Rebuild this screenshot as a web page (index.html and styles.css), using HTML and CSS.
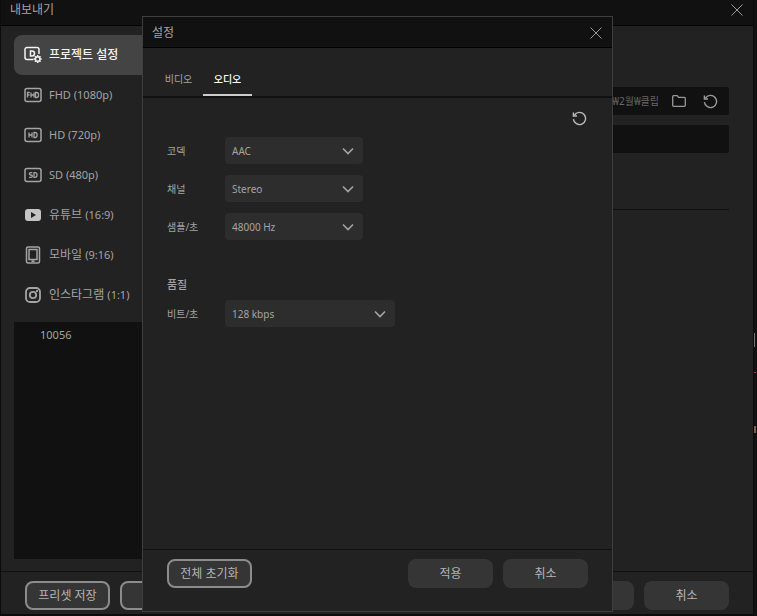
FILE: index.html
```html
<!DOCTYPE html>
<html lang="ko">
<head>
<meta charset="utf-8">
<title>내보내기</title>
<link rel="stylesheet" href="styles.css">
</head>
<body>
<svg class="sprite" aria-hidden="true">
  <symbol id="close" viewBox="0 0 12 12"><path d="M.5.5l11 11M11.5.5l-11 11"/></symbol>
  <symbol id="chevron" viewBox="0 0 12 8"><path d="M1 1.5l5 5 5-5"/></symbol>
  <symbol id="reset" viewBox="0 0 16 16"><path d="M2.400 4.600A6.500 6.500 0 1 1 1.500 8.600"/><path d="M1.500 1.500v3.800h3.800"/></symbol>
</svg>
<div class="screen">
  <div class="window">
    <header class="titlebar">
      <h1>내보내기</h1>
      <button class="icon-button" aria-label="닫기"><svg class="close"><use href="#close"/></svg></button>
    </header>
    <main class="workspace">
      <nav class="sidebar">
        <button class="preset active">
          <svg viewBox="0 0 18 18"><path d="M9.500 13.500H3a2 2 0 0 1-2-2V3.500a2 2 0 0 1 2-2h10a2 2 0 0 1 2 2V8"/><path d="M6.500 5v5H8a2.500 2.500 0 0 0 0-5z"/><circle cx="13.700" cy="13" r="2.300"/><path d="M13.700 9v1.500M13.700 15.500V17M9.700 13h1.500M16.200 13h1.500M10.900 10.200l1 1M15.500 14.800l1 1M16.500 10.200l-1 1M11.900 14.800l-1 1"/></svg>
          프로젝트 설정
        </button>
        <button class="preset">
          <svg viewBox="0 0 18 18"><rect x="1" y="2.500" width="16" height="13" rx="2"/><path class="fine" d="M3.500 11.500v-5h2.300M3.500 9h2M7 6.500v5M10 6.500v5M7 9h3M11.500 6.500v5h1a2 2 0 0 0 2-2v-1a2 2 0 0 0-2-2z"/></svg>
          <span class="latin">FHD (1080p)</span>
        </button>
        <button class="preset">
          <svg viewBox="0 0 18 18"><rect x="1" y="2.500" width="16" height="13" rx="2"/><path class="fine" d="M5 6.500v5M8 6.500v5M5 9h3M10 6.500v5h1a2 2 0 0 0 2-2v-1a2 2 0 0 0-2-2z"/></svg>
          <span class="latin">HD (720p)</span>
        </button>
        <button class="preset">
          <svg viewBox="0 0 18 18"><rect x="1" y="2.500" width="16" height="13" rx="2"/><path class="fine" d="M8.300 6.700H6.500a1.100 1.100 0 0 0 0 2.300h.7a1.100 1.100 0 0 1 0 2.300H5M10 6.700v4.600h1a2 2 0 0 0 2-2v-.6a2 2 0 0 0-2-2z"/></svg>
          <span class="latin">SD (480p)</span>
        </button>
        <button class="preset">
          <svg viewBox="0 0 18 18"><path class="solid" fill-rule="evenodd" d="M4 3h10a3 3 0 0 1 3 3v6a3 3 0 0 1-3 3H4a3 3 0 0 1-3-3V6a3 3 0 0 1 3-3zM7 6v6l5-3z"/></svg>
          <span>유튜브 <span class="latin">(16:9)</span></span>
        </button>
        <button class="preset">
          <svg viewBox="0 0 18 18"><rect x="2.500" y="1" width="13" height="16" rx="1.500"/><path d="M5 3.500h8v10H5zM7.500 15.200h3"/></svg>
          <span>모바일 <span class="latin">(9:16)</span></span>
        </button>
        <button class="preset">
          <svg class="bold" viewBox="0 0 18 18"><rect x="2" y="2" width="14" height="14" rx="4"/><circle cx="9" cy="9" r="3.200"/><circle class="solid" cx="13" cy="5" r="1"/></svg>
          <span>인스타그램 <span class="latin">(1:1)</span></span>
        </button>
        <ul class="saved"><li>10056</li></ul>
      </nav>
      <section class="output">
        <div class="field">
          <span>₩2월₩클립</span>
          <button class="icon-button" aria-label="폴더"><svg class="folder" viewBox="0 0 14 12"><path d="M.7 1.700a1 1 0 0 1 1-1h3.500l1.300 1.600h5.800a1 1 0 0 1 1 1v7a1 1 0 0 1-1 1H1.700a1 1 0 0 1-1-1z"/></svg></button>
          <button class="icon-button" aria-label="초기화"><svg class="reset"><use href="#reset"/></svg></button>
        </div>
        <input class="field" aria-label="파일 이름">
        <hr>
      </section>
    </main>
    <footer class="actions">
      <button class="button outlined">프리셋 저장</button>
      <button class="button outlined" aria-label="프리셋"></button>
      <button class="button push" aria-label="내보내기"></button>
      <button class="button">취소</button>
    </footer>
  </div>
  <div class="behind"><i class="light"></i><i class="red"></i><i class="amber"></i></div>

  <div class="dialog" role="dialog" aria-labelledby="dialog-title">
    <header class="dialog-title">
      <h2 id="dialog-title">설정</h2>
      <button class="icon-button" aria-label="닫기"><svg class="close"><use href="#close"/></svg></button>
    </header>
    <div class="tabs" role="tablist">
      <button role="tab" aria-selected="false">비디오</button>
      <button role="tab" aria-selected="true">오디오</button>
    </div>
    <form class="settings">
      <button type="button" class="icon-button restore" aria-label="초기화"><svg class="reset"><use href="#reset"/></svg></button>
      <div class="row">
        <label for="codec">코덱</label>
        <div class="select"><select id="codec"><option>AAC</option></select><svg><use href="#chevron"/></svg></div>
      </div>
      <div class="row">
        <label for="channel">채널</label>
        <div class="select"><select id="channel"><option>Stereo</option></select><svg><use href="#chevron"/></svg></div>
      </div>
      <div class="row">
        <label for="rate">샘플/초</label>
        <div class="select"><select id="rate"><option>48000 Hz</option></select><svg><use href="#chevron"/></svg></div>
      </div>
      <h3>품질</h3>
      <div class="row">
        <label for="bits">비트/초</label>
        <div class="select wide"><select id="bits"><option>128 kbps</option></select><svg><use href="#chevron"/></svg></div>
      </div>
    </form>
    <footer class="actions">
      <button class="button outlined">전체 초기화</button>
      <button class="button push">적용</button>
      <button class="button">취소</button>
    </footer>
  </div>
</div>
</body>
</html>
```
FILE: styles.css
```css
* { box-sizing: border-box; }

body {
  margin: 0;
  background: #111;
  color: #a4a4a4;
  font: 12px/16px "Noto Sans", "Noto Sans CJK KR", sans-serif;
}

h1, h2, h3 { margin: 0; font-size: 12px; font-weight: 400; }
button, input, select { font: inherit; color: inherit; }
button { padding: 0; border: 0; background: none; }
svg { flex: none; fill: none; stroke: currentColor; }
.sprite { position: absolute; width: 0; height: 0; }
.latin { font-size: 11px; }

.screen { position: relative; display: flex; min-height: 100vh; }

.window {
  flex: 1;
  display: flex;
  flex-direction: column;
  border: solid #0c0c0c;
  border-width: 0 1px 2px;
  background: #222;
}

.titlebar {
  display: flex;
  align-items: center;
  justify-content: space-between;
  height: 26px;
  padding: 0 10px 5px 9px;
  border-bottom: 1px solid #050505;
  background: #111;
}

.icon-button { display: flex; color: #999; }
.close { width: 12px; height: 12px; }
.reset { width: 15px; height: 15px; stroke-width: 1.5; }
.folder { width: 14px; height: 12px; stroke-width: 1.3; }

.workspace { flex: 1; display: flex; }

.sidebar {
  display: flex;
  flex-direction: column;
  width: 240px;
  padding: 9px 0 12px 13px;
}

.preset {
  display: flex;
  align-items: center;
  gap: 7px;
  height: 40px;
  padding-left: 10px;
  border-radius: 8px;
  text-align: left;
}
.preset svg { width: 18px; height: 18px; stroke-width: 1.5; }
.preset .fine { stroke-width: 1.3; }
.preset .bold { stroke-width: 1.8; }
.preset .solid { fill: #c4c4c4; stroke: none; }
.preset.active { background: #444; color: #f4f4f4; font-weight: 500; }

.saved {
  flex: 1;
  margin: 7px 0 0;
  padding: 5px 26px;
  background: #111;
  font-size: 11px;
  list-style: none;
}

.output {
  flex: 1;
  display: flex;
  flex-direction: column;
  gap: 10px;
  padding: 61px 24px 0 0;
}
.field {
  display: flex;
  align-items: center;
  justify-content: flex-end;
  gap: 17px;
  width: 100%;
  height: 28px;
  padding: 0 11px;
  border: 0;
  border-radius: 3px;
  background: #111;
  color: #666;
  font-size: 10px;
}
.field span { margin-right: -4px; }
.output hr { width: 100%; margin: 46px 0 0; border: 0; border-top: 1px solid #111; }

.actions {
  display: flex;
  gap: 10px;
  padding: 9px 24px 23px;
  border-top: 1px solid #111;
}
.window > .actions { padding-bottom: 4px; }

.button {
  width: 85px;
  height: 29px;
  border-radius: 8px;
  background: #353535;
  color: #b4b4b4;
}
.outlined { border: 2px solid #8c8c8c; }
.push { margin-left: auto; }

.behind { width: 3px; background: #111; }
.behind i { display: block; }
.light { width: 1px; height: 14px; margin-top: 333px; background: #777; }
.red { width: 2px; height: 1px; margin-top: 25px; background: #d22c4a; }
.amber { width: 2px; height: 7px; margin-top: 53px; background: #806040; }

.dialog {
  position: absolute;
  inset: 16px 144px 4px 142px;
  display: flex;
  flex-direction: column;
  border: 1px solid #3e3e3e;
  background: #222;
}
.dialog-title {
  display: flex;
  align-items: center;
  justify-content: space-between;
  height: 31px;
  padding: 1px 10px 0 9px;
  border-bottom: 1px solid #000;
  background: #111;
}

.tabs {
  display: flex;
  height: 50px;
  padding: 16px 11px 0;
  border-bottom: 2px solid #111;
}
.tabs button {
  width: 49px;
  border-bottom: 2px solid transparent;
  font-size: 10px;
}
.tabs [aria-selected="true"] { border-color: #ccc; color: #fff; font-weight: 500; }

.settings {
  flex: 1;
  padding: 13px 25px 13px 24px;
  font-size: 10px;
}
.restore { margin-left: auto; color: #bbb; }
.row { display: flex; align-items: center; margin-top: 11px; }
.row label { width: 58px; }
.settings h3 { margin-top: 37px; font-size: 11px; font-weight: 500; }
.settings h3 + .row { margin-top: 7px; }

.select { display: grid; align-items: center; width: 138px; height: 27px; }
.select.wide { width: 170px; }
.select select {
  grid-area: 1 / 1;
  width: 100%;
  height: 100%;
  padding: 0 7px;
  border: 0;
  border-radius: 4px;
  background: #2d2d2d;
  appearance: none;
}
.select svg {
  grid-area: 1 / 1;
  justify-self: end;
  width: 12px;
  height: 8px;
  margin-right: 9px;
  stroke-width: 1.6;
  pointer-events: none;
}
```
